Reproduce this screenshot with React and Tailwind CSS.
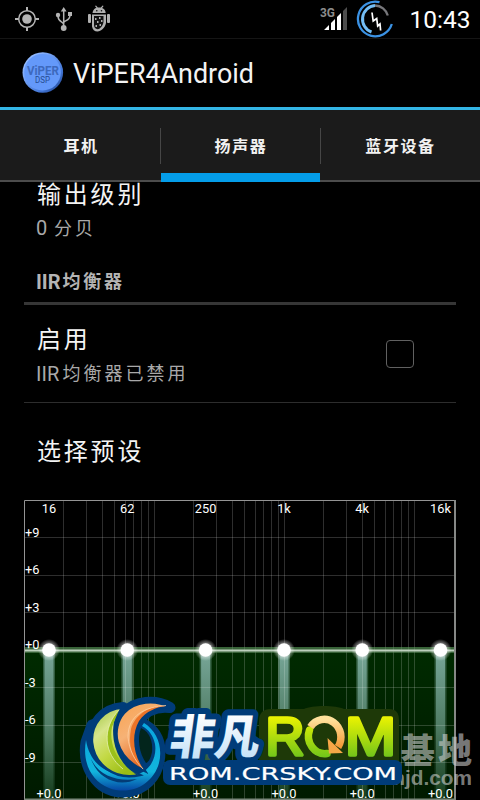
const TABS = [
  { label: "耳机", active: false },
  { label: "扬声器", active: true },
  { label: "蓝牙设备", active: false },
];

const V_LINES = [
  63, 86, 102, 114, 125, 133, 141, 148, 154, 193, 216, 232, 244, 255, 263, 271,
  278, 284, 323, 346, 362, 374, 385, 393, 401, 408, 414,
];
const H_LINES = [537, 575, 612, 687, 725, 762];
const BANDS = [
  { x: 49, label: "16" },
  { x: 127.3, label: "62" },
  { x: 205.6, label: "250" },
  { x: 284, label: "1k" },
  { x: 362.2, label: "4k" },
  { x: 440.5, label: "16k" },
];
const LEVELS = [
  { y: 537, label: "+9" },
  { y: 574, label: "+6" },
  { y: 612, label: "+3" },
  { y: 649, label: "+0" },
  { y: 687, label: "-3" },
  { y: 724, label: "-6" },
  { y: 762, label: "-9" },
];

function StatusBar() {
  return (
    <header className="flex h-[39px] shrink-0 items-center border-b border-[#151515]">
      <svg className="ml-[15px] h-[38px] w-[24px]" viewBox="15 0 24 38" fill="none" stroke="#b4b4b4">
        <circle cx="27" cy="19" r="8.3" strokeWidth="1.5" />
        <circle cx="27" cy="19" r="4.8" fill="#b4b4b4" stroke="none" />
        <path d="M27 7v4M27 27v4M15 19h4M35 19h4" strokeWidth="2" />
      </svg>
      <svg className="ml-[16px] h-[38px] w-[18px]" viewBox="55 0 18 38" fill="none" stroke="#b4b4b4" strokeWidth="1.5">
        <path d="M63.7 28V10M63.7 24.5C63 21.5 58 22 58 16M63.7 22.5C65 20 70 21 70 15" />
        <path d="M60.8 11.5l2.9-4.500 2.900 4.500z" fill="#b4b4b4" stroke="none" />
        <circle cx="63.700" cy="28" r="2.900" fill="#b4b4b4" stroke="none" />
        <circle cx="58" cy="15" r="2.200" fill="#b4b4b4" stroke="none" />
        <path d="M68 12h4v4h-4z" fill="#b4b4b4" stroke="none" />
      </svg>
      <svg className="ml-[14px] h-[38px] w-[24px]" viewBox="87 0 24 38" fill="#b0b0b0">
        <path d="M92.500 13c.3-3 2.200-5 4-5l-1.500-2 1-.6 1.800 2.200h3l1.800-2.200 1 .6-1.500 2c2 .5 3.400 2.500 3.600 5z" />
        <rect x="88" y="14" width="3" height="9" rx="1" />
        <rect x="107" y="14" width="3" height="9" rx="1" />
        <path d="M92 14.500h14V23c-1 5-5 8.300-8.500 8.500-3 0-5-2-5.500-5z" />
        <path d="M94 16h9.500v5c0 4-3 8-6 8.300-2-.3-3.500-2-3.500-4z" fill="#111" />
        <path d="M95 18h1.500v2H95zM99 17h1.500v2H99zM97 21h1.500v2H97zM101 20h1.500v2H101zM95.500 25H97v2h-1.500zM99.500 24h1.500v2h-1.500z" />
        <circle cx="96.800" cy="10.800" r=".8" fill="#111" />
        <circle cx="101.500" cy="10.800" r=".8" fill="#111" />
      </svg>
      <div className="flex-1" />
      <svg className="h-[38px] w-[28px]" viewBox="320 0 28 38">
        <text x="320" y="17" fontSize="13.500" fontWeight="700" fill="#8c8c8c" textLength="15" lengthAdjust="spacingAndGlyphs" fontFamily="Roboto, sans-serif">3G</text>
        <path d="M324 30l5-5v5zM331 23l4-4v11h-4zM337 17l4-4v17h-4z" fill="#fff" />
        <path d="M343 11l4-4v23h-4z" fill="#4d4d4d" />
      </svg>
      <svg className="ml-[8px] h-[38px] w-[38px]" viewBox="356 0 38 38" fill="none">
        <path d="M379.500 2.200A17.300 17.300 0 1 0 391.800 24" stroke="#3b92e4" strokeWidth="2.300" />
        <path d="M375 5.500A13.700 13.700 0 0 0 371.500 32" stroke="#73bdf5" strokeWidth="3" />
        <path d="M375 5.500A13.700 13.700 0 0 1 387.800 15.500" stroke="#77777b" strokeWidth="2.300" />
        <path d="M372 12.500l1.200 8.500 3.500-2.500 1 7.500 2.300-2 .6 6.500" stroke="#fff" strokeWidth="1.700" />
      </svg>
      <svg className="ml-[14px] mr-[6px] h-[38px] w-[66px]" viewBox="408 0 66 38">
        <text x="409.500" y="28" fontSize="24.500" fill="#fff" textLength="61" fontFamily="Roboto, sans-serif">10:43</text>
      </svg>
    </header>
  );
}

function ActionBar() {
  return (
    <div className="flex h-[71px] shrink-0 items-center border-b-[3px] border-[#33b5e5] pl-[22px]">
      <svg className="h-[42px] w-[42px] shrink-0" viewBox="0 0 42 42">
        <defs>
          <linearGradient id="orb" x1="0" y1="0" x2="1" y2="1">
            <stop offset="0" stopColor="#a9cbff" />
            <stop offset=".2" stopColor="#8db6ff" />
            <stop offset=".7" stopColor="#4478d8" />
            <stop offset="1" stopColor="#193a80" />
          </linearGradient>
        </defs>
        <circle cx="20.800" cy="20.500" r="20.300" fill="url(#orb)" />
        <circle cx="20.500" cy="20.200" r="18.300" fill="#6499fa" />
        <text x="5" y="22.500" fontSize="13" fontWeight="700" fill="#3d69bd" textLength="32" lengthAdjust="spacingAndGlyphs" fontFamily="Roboto, sans-serif">ViPER</text>
        <text x="13" y="31" fontSize="9" fill="#264c91" textLength="15" lengthAdjust="spacingAndGlyphs" fontFamily="Roboto, sans-serif">DSP</text>
      </svg>
      <svg className="ml-[8px] h-[40px] w-[190px]" viewBox="72 54 190 40">
        <text x="73" y="83.500" fontSize="27" fill="#f3f3f3" textLength="181" lengthAdjust="spacingAndGlyphs" fontFamily="Roboto, sans-serif">ViPER4Android</text>
      </svg>
    </div>
  );
}

function Tabs() {
  return (
    <nav className="grid h-[72px] shrink-0 grid-cols-[161px_159px_160px] bg-[#1b1b1b]">
      {TABS.map((tab, i) => (
        <div
          key={tab.label}
          className={
            tab.active
              ? "flex items-center justify-center border-b-[9px] border-[#049de9] pt-[11px]"
              : "relative flex items-center justify-center border-b-2 border-[#4c4c4c] pt-[4px]"
          }
        >
          <span className="pl-px text-[16px] leading-[20px] font-bold tracking-[1.6px] text-[#f2f2f2]">{tab.label}</span>
          {i === 0 && <span className="absolute top-[18px] right-0 h-[36px] w-px bg-[#464646]" />}
          {i === 2 && <span className="absolute top-[18px] left-0 h-[36px] w-px bg-[#464646]" />}
        </div>
      ))}
    </nav>
  );
}

function Settings() {
  return (
    <main className="flex h-[318px] shrink-0 flex-col px-[24px]">
      <div className="pt-px pl-[13px] text-[24px] leading-[24px] tracking-[2.800px] text-[#f4f4f4]">输出级别</div>
      <div className="mt-[9px] pl-[12px] text-[18px] leading-[24px] tracking-[3px] text-[#a9a9a9]">
        <span className="inline-block w-[18px] text-[20px] leading-[24px] tracking-normal">0</span>分贝
      </div>
      <div className="mt-[29px] flex h-[24px] items-center pl-[12px] font-bold text-[#b4b4b4]">
        <span className="w-[26.500px] text-[20px] leading-[24px]">IIR</span>
        <span className="text-[18px] leading-[24px] tracking-[2.800px]">均衡器</span>
      </div>
      <div className="mt-[8px] h-[3px] shrink-0 bg-[#363636]" />
      <div className="flex h-[98px] shrink-0 items-center justify-between border-b border-[#2d2d2d] pr-[42px] pl-[12px]">
        <div className="pt-[7px]">
          <div className="pl-px text-[24px] leading-[32px] tracking-[2.800px] text-[#f4f4f4]">启用</div>
          <div className="mt-[2px] flex text-[#a9a9a9]">
            <span className="w-[26.500px] text-[20px] leading-[32px]">IIR</span>
            <span className="text-[18px] leading-[32px] tracking-[3px]">均衡器已禁用</span>
          </div>
        </div>
        <div className="h-[28px] w-[28px] rounded-[4px] border border-[#616161]" />
      </div>
      <div className="flex h-[97px] shrink-0 items-center pl-[13px] text-[24px] tracking-[2.800px] text-[#f4f4f4]">选择预设</div>
    </main>
  );
}

function Equalizer() {
  return (
    <svg className="block h-[300px] w-[480px] shrink-0" viewBox="0 500 480 300" fontFamily="Roboto, sans-serif">
      <defs>
        <linearGradient id="bar" x1="0" y1="0" x2="0" y2="1">
          <stop offset="0" stopColor="#78a799" />
          <stop offset=".5" stopColor="#507d65" />
          <stop offset="1" stopColor="#153c1c" />
        </linearGradient>
        <linearGradient id="area" x1="0" y1="0" x2="0" y2="1">
          <stop offset="0" stopColor="#002b00" />
          <stop offset="1" stopColor="#001a00" />
        </linearGradient>
        <radialGradient id="halo">
          <stop offset=".45" stopColor="#fff" stopOpacity=".65" />
          <stop offset="1" stopColor="#fff" stopOpacity="0" />
        </radialGradient>
      </defs>
      <rect x="24" y="647" width="432" height="152" fill="url(#area)" />
      {BANDS.map((b) => (
        <g key={b.label}>
          <rect x={b.x - 6} y="650" width="12" height="149" fill="url(#bar)" opacity=".45" />
          <rect x={b.x - 4.5} y="650" width="9" height="149" fill="url(#bar)" />
        </g>
      ))}
      <g fill="#fff" fillOpacity=".18">
        {V_LINES.map((x) => <rect key={x} x={x} y="500" width="1" height="299" />)}
        {H_LINES.map((y) => <rect key={y} x="24" y={y} width="431" height="1" />)}
      </g>
      <rect x="24" y="647" width="431" height="6" fill="#669266" opacity=".55" />
      <rect x="24" y="649.500" width="431" height="2" fill="#bdd0bd" />
      <path d="M24.500 799V500.500H454" fill="none" stroke="#949494" />
      <rect x="454" y="500" width="2" height="300" fill="#868886" />
      <rect x="24" y="798.500" width="432" height="1.500" fill="#7c887c" />
      <g fill="#fff" fontSize="12.800">
        {BANDS.map((b) => (
          <g key={b.label}>
            <circle cx={b.x} cy="650" r="11" fill="url(#halo)" />
            <circle cx={b.x} cy="650" r="6.800" />
            <text x={b.x} y="513" textAnchor="middle">{b.label}</text>
            <text x={b.x} y="798" textAnchor="middle">+0.0</text>
          </g>
        ))}
        {LEVELS.map((l) => <text key={l.label} x="25" y={l.y}>{l.label}</text>)}
      </g>
      <Watermark />
      <RomBadge />
    </svg>
  );
}

function Watermark() {
  return (
    <g fill="#d5d5d5" fillOpacity=".58" fontWeight="900">
      <text x="326" y="763" fontSize="34" textLength="146" fontFamily="'Noto Sans CJK SC', sans-serif">刷机基地</text>
      <text x="312" y="785" fontSize="21" textLength="160" lengthAdjust="spacingAndGlyphs" fontFamily="'Liberation Sans', sans-serif">www.romjd.com</text>
    </g>
  );
}

function RomBadge() {
  const leaf =
    "M123 707.500C103 709 91 724 92 742C94 764 114 781 140 775C123 768 112 754 109 737C108 724 114 714 123 707.500Z";
  const flame =
    "M170 707.500C155 699 135 701 124 713C111 728 113 757 145 771C134 755 131 733 139 721C146 710 157 706 170 707.500Z";
  return (
    <g>
      <defs>
        <linearGradient id="leaf" x1="0" y1="0" x2=".6" y2="1">
          <stop offset="0" stopColor="#98c035" />
          <stop offset=".35" stopColor="#d7e58b" />
          <stop offset=".65" stopColor="#c3d945" />
          <stop offset="1" stopColor="#9bbd15" />
        </linearGradient>
        <linearGradient id="flame" x1="0" y1="0" x2=".55" y2="1">
          <stop offset="0" stopColor="#f9a24e" />
          <stop offset=".45" stopColor="#f6b276" />
          <stop offset="1" stopColor="#df540c" />
        </linearGradient>
        <linearGradient id="sea" x1="0" y1="0" x2="0" y2="1">
          <stop offset="0" stopColor="#08a5df" />
          <stop offset=".72" stopColor="#12b4dd" />
          <stop offset="1" stopColor="#0646a3" />
        </linearGradient>
        <linearGradient id="ice" x1="0" y1="0" x2="0" y2="1">
          <stop offset=".2" stopColor="#fff" />
          <stop offset="1" stopColor="#b8dcf6" />
        </linearGradient>
        <linearGradient id="lime" gradientUnits="userSpaceOnUse" x1="0" y1="715" x2="0" y2="757">
          <stop offset="0" stopColor="#f1f500" />
          <stop offset="1" stopColor="#72c51a" />
        </linearGradient>
        <linearGradient id="arrow" x1="0" y1="0" x2="0" y2="1">
          <stop offset="0" stopColor="#ffe19b" />
          <stop offset="1" stopColor="#f39a37" />
        </linearGradient>
      </defs>

      {/* globe emblem */}
      <g fill="#003c79" stroke="#003c79" strokeWidth="11" strokeLinejoin="round">
        <path d={leaf} />
        <path d={flame} />
        <path d="M86 742C82 767 97 791 121 792C144 793 160 776 160 751C160 739 153 728 143 724L122 720L92 725Z" />
      </g>
      <path d="M144 723C157 731 163 747 159 763C153 785 130 796 109 788C91 781 82 762 86 740C89 760 102 772 121 775C144 780 158 762 155 744C153 735 149 730 142 726Z" fill="url(#sea)" />
      <path d="M91 759C99 776 118 782 137 779C119 788 98 779 91 759Z" fill="#033c76" />
      <path d="M141 728C150 732 153 742 152 752C151 757 149 762 146 763C139 753 137 738 141 728Z" fill="#03251c" />
      <path d="M123 707.500C103 709 91 724 92 742C94 764 114 781 140 775C129 770 118 758 115 740C113 726 116 714 123 707.500Z" fill="url(#leaf)" stroke="#003c79" strokeWidth="2.500" />
      <path d="M119 710C102 728 104 755 122 768L139 775C122 768 108 749 112 727Z" fill="#9ac019" />
      <path d="M119 710C102 728 103 753 123 769" fill="none" stroke="#e5efae" strokeWidth=".8" />
      <path d={flame} fill="url(#flame)" stroke="#003c79" strokeWidth="2.500" />
      <path d="M166 706C149 705 135 715 131 729C128 745 132 758 144 770C133 755 131 735 139 721C146 711 157 707 166 706Z" fill="#ec7328" />
      <path d="M166 705.500C145 707 128 715 128 737C129 750 135 761 143 769" fill="none" stroke="#ffd0a3" strokeWidth=".8" />

      {/* wordmark */}
      <path d="M271 709H304C312 705 336 705 344 709H389Q399 709 399 720V764H259V721Q259 709 271 709Z" fill="#1e3908" />
      <g transform="translate(106 0) skewX(-8)" strokeLinejoin="round">
        <text x="168" y="754.500" fontSize="47" fontWeight="900" fontFamily="'Noto Sans CJK SC', sans-serif" textLength="90" lengthAdjust="spacingAndGlyphs" fill="url(#ice)" stroke="#003c79" strokeWidth="12" paintOrder="stroke">非凡</text>
      </g>
      <g fontFamily="'Liberation Sans', sans-serif" fontSize="53" fill="url(#lime)" stroke="url(#lime)" strokeWidth="3.500" strokeLinejoin="round">
        <text x="265.500" y="755" textLength="39" lengthAdjust="spacingAndGlyphs">R</text>
        <text x="345" y="755" textLength="51" lengthAdjust="spacingAndGlyphs">M</text>
      </g>
      <path d="M327 753.500A16.500 17.500 0 0 1 309.500 730" fill="none" stroke="url(#lime)" strokeWidth="7.500" strokeLinecap="round" />
      <path d="M310.500 727A16.500 17.500 0 1 1 338 747" fill="none" stroke="url(#arrow)" strokeWidth="7.500" />
      <path d="M327.500 738L343 753L329 753.500Z" fill="#f6a747" />
      <rect x="163" y="760" width="239" height="25" rx="7" fill="#003c79" />
      <text x="169" y="779.500" fontSize="18.500" textLength="228" lengthAdjust="spacingAndGlyphs" fill="#fff" stroke="#fff" strokeWidth=".2" fontFamily="'DejaVu Sans', sans-serif">ROM.CRSKY.COM</text>
    </g>
  );
}

export default function App() {
  return (
    <div className="flex h-[800px] w-[480px] flex-col overflow-hidden bg-black font-[Roboto,'Noto_Sans_CJK_SC',sans-serif]">
      <StatusBar />
      <ActionBar />
      <Tabs />
      <Settings />
      <Equalizer />
    </div>
  );
}
